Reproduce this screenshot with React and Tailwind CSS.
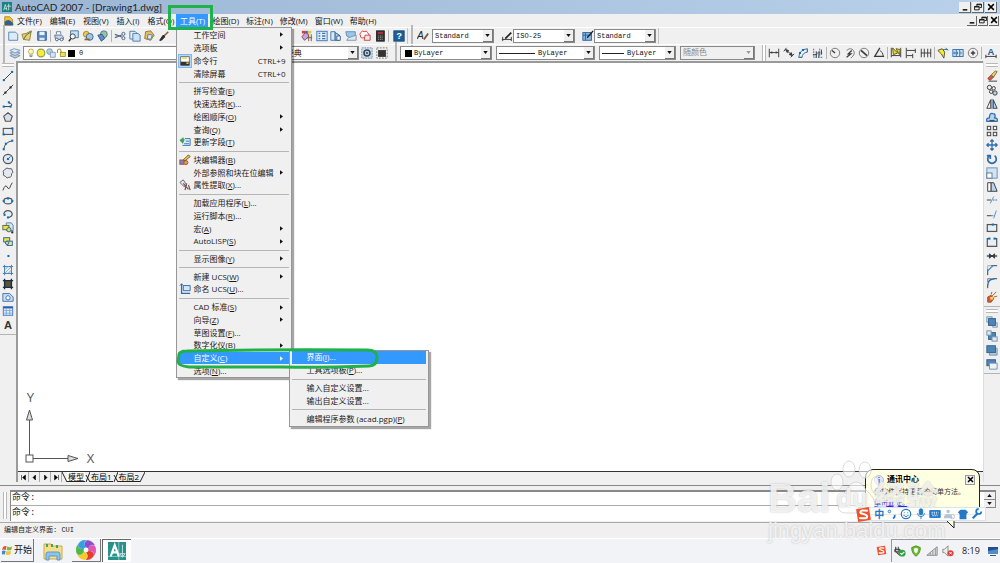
import React from "react";

const ui = "font-['Open_Sans','Noto_Sans_CJK_SC',sans-serif]";
const mono = "font-['Liberation_Mono','Noto_Sans_CJK_SC',monospace]";

const B = "#2f6cab";
const K = "#3c3c3c";
const L = "#b9d3ee";

function Svg({ children, className = "h-3 w-3" }) {
  return (
    <svg viewBox="0 0 14 14" fill="none" stroke={K} strokeWidth="1.1" className={"block shrink-0 " + className} aria-hidden="true">
      {children}
    </svg>
  );
}

const dot = (x, y, c = "#0a6fc2") => <rect x={x - 1.2} y={y - 1.2} width="2.4" height="2.4" fill={c} stroke="none" key={x + "-" + y} />;

const I = {
  new: <path d="M2 2.5h8l2.5 2.5v7H2z" fill="#dcebf8" stroke="#5b86b5" />,
  open: <><path d="M1 5l5-1 6-3-2 11-7-1z" fill="#e7d27b" stroke="#9a8133" /><path d="M3 11l3-5 6-4" stroke="#3f6b46" /></>,
  save: <><path d="M2 2h10v10H2z" fill="#5b8ac6" stroke="#2f5c95" /><path d="M4 2h6v4H4z" fill="#eaf3fc" stroke="none" /><path d="M4 9h6v3H4z" fill="#dfe7ef" stroke="none" /></>,
  print: <><path d="M4 5V2h5v3" fill="#fff" stroke="#6a7fa0" /><path d="M2 6h8l2 2v3H3z" fill="#cfd7e3" stroke="#5b6f92" /><circle cx="4.5" cy="11" r="1.6" fill="#fff" stroke="#46618c" /><circle cx="10" cy="11" r="1.6" fill="#fff" stroke="#46618c" /></>,
  preview: <><path d="M3 1h9v8H3z" fill="#cfe2f5" stroke="#4775aa" /><circle cx="5.5" cy="7.5" r="3" fill="#eef6fd" /><path d="M3.5 10L1 13" strokeWidth="1.8" /></>,
  publish: <><circle cx="5" cy="5" r="3.4" fill="#f2c94a" stroke="#a8822a" /><circle cx="9" cy="8" r="4" fill="#9fc6e6" stroke="#376a9b" /><path d="M3 11h6" stroke="#876421" strokeWidth="2" /></>,
  dwf: <><circle cx="8" cy="5" r="4" fill="#9fc0a0" stroke="#4f7d93" /><path d="M1 6l5-1 3 5-4 3z" fill="#5e8cc4" stroke="#345d90" /></>,
  cut: <><path d="M1 5l8 3M1 9l8-3" stroke="#5d6b80" strokeWidth="1.5" /><circle cx="11" cy="9.5" r="1.8" stroke="#46618c" /><circle cx="11" cy="4.500" r="1.8" stroke="#46618c" /></>,
  copy: <><path d="M1 1.5h6l2 2v7H1z" fill="#e6f0fa" stroke="#4d7cad" /><path d="M4.500 4h6l2.500 2v7h-8.500z" fill="#cfe2f5" stroke="#4d7cad" /></>,
  paste: <><path d="M3 2l6-1 4 5-4 6-7-2z" fill="#e3bf5d" stroke="#9a7829" /><path d="M6 5l5 1-2 5-4-1z" fill="#dbe9f7" stroke="#5780aa" /></>,
  brush: <><path d="M12 2L7 7" stroke="#8a5a34" strokeWidth="1.8" /><path d="M6 6l2 2-4 4-2 0z" fill="#2c2c2c" stroke="#222" /></>,
  props: <><path d="M1 8l4-5 3 1 1 4-5 4z" fill="#c6a5d8" stroke="#7a4d7f" /><rect x="1" y="1" width="4" height="3" fill="#e33" stroke="none" /><rect x="5" y="1" width="3" height="3" fill="#36c" stroke="none" /><rect x="8" y="1" width="4" height="3" fill="#dc3" stroke="none" /><path d="M9 5v8M12 5v8M7 9l6 0" stroke="#7b5a39" /></>,
  center: <><rect x="1" y="1.500" width="12" height="11" fill="#e4effa" stroke="#3c78b4" /><path d="M3 4h2M3 7h2M3 10h2M7 4h4M7 7h4M7 10h4" stroke="#3c78b4" strokeWidth="1.6" /></>,
  palette: <><path d="M1 2h5v10H1z" fill="#dcebf8" stroke="#3c78b4" /><path d="M6 3l5 3v6H6z" fill="#b9d3ee" stroke="#355f8c" /><path d="M8 7h4v5H8z" fill="#fff" stroke="#355f8c" /></>,
  sheet: <><path d="M1 2h11v6l-6 1-4-2z" fill="#9cc4e6" stroke="#5f92bd" /><path d="M4 9l9-3v6H2z" fill="#dfe6ec" stroke="#7a97b0" /></>,
  markup: <><path d="M2 3q2-3 4-1 3-2 4 1 3 2 0 4 0 3-4 2-5 1-4-2-2-2 0-4z" fill="#fff" stroke="#de3535" /><path d="M7 6h6v6H6z" fill="#f6e8ea" stroke="#c44" /></>,
  calc: <><rect x="3" y="1" width="9" height="12" fill="#333" stroke="#222" /><rect x="4.500" y="2.500" width="6" height="2" fill="#b33" stroke="none" /><path d="M5 7h6M5 9h6M5 11h6" stroke="#aaa" strokeDasharray="1 1" /></>,
  help: <><rect x="1" y="1" width="12" height="12" fill="#1f5f98" stroke="#174a78" /><text x="7" y="11" fontSize="11" fontWeight="bold" textAnchor="middle" fill="#fff" stroke="none" fontFamily="Liberation Sans">?</text></>,
  textStyle: <><text x="0" y="10" fontSize="12" fontStyle="italic" fill="#222" stroke="none" fontFamily="Liberation Sans">A</text><path d="M13 4L8 11" stroke="#75543a" strokeWidth="2" /></>,
  dimStyle: <><path d="M1 11h11M2 8v5M12 8v5" /><path d="M12 3L5 10" stroke="#222" strokeWidth="2" /></>,
  tabStyle: <><rect x="1" y="3" width="10" height="9" fill="#8db8e2" stroke="#2e639e" /><path d="M1 6h10M4 3v9" stroke="#2e639e" /><path d="M13 1L6 9" stroke="#222" strokeWidth="1.6" /></>,
  layers: <><path d="M1 10l5-2 7 2-6 3z" fill="#b8cbdc" stroke="#7c98b2" /><path d="M1 7l5-2 7 2-6 3z" fill="#c9dae9" stroke="#7c98b2" /><path d="M1 4l5-2 7 2-6 3z" fill="#dcebf8" stroke="#7c98b2" /></>,
  bulb: <><circle cx="7" cy="5" r="3.600" fill="#fdf6b0" stroke="#b5a544" /><path d="M5.500 9v3h3V9" fill="#ccc" stroke="#777" /></>,
  sun: <circle cx="7" cy="7" r="5.400" fill="#f3ec3b" stroke="#8e9d5c" strokeWidth="1.600" />,
  freeze: <><circle cx="5" cy="5" r="4" fill="#b8cfdf" stroke="#6b8ca5" /><path d="M6 6h7v7H6z" fill="#d8e4ee" stroke="#7393ac" /></>,
  lock: <><path d="M2 7V4a2.500 2.500 0 015 0v2" stroke="#a1922d" strokeWidth="1.500" /><rect x="6" y="6" width="7" height="6" fill="#ece54a" stroke="#8e8433" /></>,
  gear: <><rect x="1" y="1" width="12" height="12" fill="#cfe0ee" stroke="#688bab" strokeDasharray="2 1" /><circle cx="7" cy="7" r="3.500" stroke="#345" strokeWidth="1.800" /><circle cx="7" cy="7" r="1" /></>,
  gear2: <><rect x="1" y="1" width="12" height="12" stroke="#777" strokeDasharray="2 1.500" /><rect x="3" y="4" width="8" height="7" fill="#333" /></>,
  dLinear: <><path d="M1.500 2v10M12.500 2v10M2 6.500h10" /><path d="M2 6.500l3-1.500v3zM12 6.500l-3-1.500v3z" fill={K} stroke="none" /></>,
  dAligned: <><path d="M3 3l8 7M1 5l3-4M9 12l4-4" /><path d="M3 3l3.500 1-1.500 2.500zM11 10l-3.500-1 2-2.500z" fill={K} /></>,
  dArc: <><path d="M2 12Q3 3 12 2M6 12q0-5 6-6" stroke={B} /><path d="M2 12h4M12 2v4" />{dot(3.500, 7)}{dot(7, 3.500)}</>,
  dOrd: <><path d="M2 2v10h10M5 7h7M9 2v8" strokeDasharray="2 1" stroke={B} /><path d="M1 9h5M5 5v7M8 5v7M11 9V3" /></>,
  dRad: <><circle cx="7" cy="7" r="5.500" stroke="#777" /><path d="M7 7L3.500 4" strokeWidth="1.600" /></>,
  dJog: <><path d="M3 4q5-4 8 0t-3 9" stroke="#777" /><path d="M9 4L5 8h3l-5 4" strokeWidth="1.500" /></>,
  dDia: <><circle cx="7" cy="7" r="5.500" stroke="#777" /><path d="M3.500 4l7 6" strokeWidth="2" /></>,
  dAng: <><path d="M8 1L2 11h11" strokeWidth="1.500" /><path d="M8 4q4 2 4 7" /></>,
  dQuick: <><path d="M1.500 1v11M12.500 1v11M2 10h10" /><path d="M3 1l6 6-5 2zM7 2l5 1-1 6z" fill="#e6d92a" stroke="#66601f" /></>,
  dBase: <path d="M1.500 1v12M2 4h10M2 10h7M12 2v5M9 8v5" />,
  dCont: <path d="M1.500 2v10M5 2v10M9 2v10M12.500 2v10M1 7h12" />,
  dLead: <><path d="M1 4l5-2 3 4-1 7-3-5z" fill="#f5e93a" stroke="#565322" /><path d="M7 3h6M10 1l3 3" stroke={B} /></>,
  dTol: <><rect x="1" y="3" width="12" height="8" fill="#dbe9f7" stroke={B} /><path d="M5 3v8M9 3v8" stroke={B} /><circle cx="3" cy="7" r="1" stroke={B} /><path d="M6.500 5.500v3M10.500 5.500v3" stroke={B} /></>,
  dCen: <><circle cx="7" cy="7" r="5.500" stroke="#777" /><path d="M7 4.500v5M4.500 7h5" strokeWidth="1.600" /></>,
  dEdit: <><text x="7" y="9" fontSize="11" fontWeight="bold" textAnchor="middle" fill="#2b5f98" stroke="none" fontFamily="Liberation Sans">A</text><path d="M1 9v4M13 9v4M1 11h12" /></>,
  line: <><path d="M2 12L12 2" />{dot(2.2, 11.8)}{dot(11.8, 2.2)}</>,
  xline: <><path d="M1 13L13 1" />{dot(4, 10, "#222")}{dot(10, 4, "#222")}</>,
  pline: <><path d="M2 10h8q3-2 0-4H8" />{dot(2, 10)}{dot(10, 10)}{dot(8, 5)}</>,
  polygon: <path d="M7 2l5 4-2 6H4L2 6z" fill="#d5dfea" stroke="#555" strokeWidth="1.300" />,
  rect: <><rect x="1.500" y="4" width="11" height="7" fill="#e3ecf5" strokeWidth="1.300" stroke="#555" />{dot(2, 11)}{dot(12, 4)}</>,
  arc: <><path d="M2 12Q3 4 12 2" />{dot(2, 12)}{dot(4.500, 5.500)}{dot(12, 2)}</>,
  circle: <><circle cx="7" cy="7" r="5.500" fill="#dce9f6" stroke="#555" strokeWidth="1.400" />{dot(7, 7)}<path d="M7 7l3-3" stroke={B} /></>,
  cloud: <path d="M3 3q3-3 5-1 4-1 4 2 2 3-1 4 1 4-3 4-2 2-4-1-4-1-2-4-2-2 1-4z" fill="#e2e9f0" stroke="#555" />,
  spline: <path d="M1 11q3-8 5-4t3 1 3-6" />,
  ellipse: <><ellipse cx="7" cy="7" rx="5" ry="3.400" fill="#e6eef7" stroke="#555" strokeWidth="1.300" />{dot(2, 7)}{dot(12, 7)}{dot(7, 4)}</>,
  earc: <><path d="M2 7q1-4 5-4t5 4q0 3-4 4" fill="#e6eef7" stroke="#555" strokeWidth="1.300" />{dot(3, 8)}{dot(7, 11)}</>,
  insert: <><path d="M5 1h6l2 3v6H5z" fill="#d4e4f3" stroke="#5684b2" /><rect x="1" y="4" width="7" height="5" fill="#eee14b" stroke="#5a6e33" /><circle cx="8" cy="9" r="2.500" fill="#e8dc66" stroke="#2d6297" />{dot(12, 12, "#222")}</>,
  block: <><rect x="2" y="2" width="7" height="5" fill="#eee14b" stroke="#2d6297" /><rect x="6" y="6" width="6" height="5" fill="#f1e97c" stroke="#2d6297" /><circle cx="6" cy="8" r="2" fill="#b9d3ee" stroke="#2d6297" /></>,
  point: dot(7.500, 7),
  hatch: <><path d="M3 1v12M11 1v12M1 3h12M1 11h12" stroke="#3975af" /><path d="M3 7l4-4M3 11l8-8M7 11l4-4" stroke="#7faad4" /></>,
  grad: <><rect x="3" y="3" width="8" height="8" fill="#5c5733" /><path d="M3 1v12M11 1v12M1 3h12M1 11h12" stroke="#1d2c47" strokeWidth="1.600" /></>,
  region: <><path d="M1 3h8l4 4v5H1z" fill="#c9def2" stroke="#3f76ae" /><circle cx="7" cy="8" r="2.500" fill="#fff" stroke="#3f76ae" /></>,
  table: <><rect x="1.500" y="2" width="11" height="10" fill="#e6f0fb" stroke="#4277bd" /><path d="M1.500 3h11" stroke="#2c5cab" strokeWidth="2" /><path d="M5 4v8M9 4v8M2 6.500h10M2 9.500h10" stroke="#7fa8dc" /></>,
  text: <text x="7" y="12" fontSize="13" fontWeight="bold" textAnchor="middle" fill="#333" stroke="none" fontFamily="Liberation Sans">A</text>,
  erase: <><path d="M2 10l4-4 3 2-4 4z" fill="#d75644" stroke="#903a2e" /><path d="M6 6l5-5 2 1-4 6z" fill="#eed56b" stroke="#7b6a30" /><path d="M3 13h10" /></>,
  mcopy: <><circle cx="4" cy="4" r="2.500" /><circle cx="9" cy="5" r="2" /><circle cx="6" cy="9" r="2" /><circle cx="10.500" cy="10.500" r="2.500" fill={L} /></>,
  mirror: <><path d="M5.500 2v10H1z" fill="#fff" /><path d="M8.500 2v10H13z" fill={L} /><path d="M7 1v12" stroke={B} /></>,
  offset: <><path d="M1 12q-1-4 3-4 0-6 4-5 4 0 2 5 4 0 3 4z" fill={L} stroke={B} strokeWidth="1.500" /><path d="M4 11h6" /></>,
  array: <><rect x="1.500" y="1.500" width="4" height="4" /><rect x="8.500" y="1.500" width="4" height="4" /><rect x="1.500" y="8.500" width="4" height="4" /><rect x="8.500" y="8.500" width="4" height="4" /></>,
  move: <path d="M7 1v12M1 7h12M5 3l2-2 2 2M5 11l2 2 2-2M3 5L1 7l2 2M11 5l2 2-2 2" stroke={B} strokeWidth="1.500" />,
  rotate: <path d="M4 3a5 5 0 106 0M1 3h4v4" stroke={B} strokeWidth="2" />,
  scale: <><rect x="1" y="1" width="12" height="12" fill="#d3e3f2" stroke="#6c91b6" /><rect x="1" y="7" width="6" height="6" fill="#fff" stroke="#58799b" /></>,
  stretch: <><path d="M2 2h4v10H2z" fill="#fff" /><path d="M6 2l3 0 4 10H6z" fill={L} /></>,
  trim: <><path d="M1 7h5" /><path d="M8 7h5" strokeDasharray="2 1" stroke={B} /><path d="M5 11l4-8" stroke="#4b91d6" /></>,
  extend: <><path d="M1 9h5" /><path d="M6 9h4" strokeDasharray="2 1" stroke={B} /><path d="M9 12l3-9" stroke="#4b91d6" /></>,
  brk1: <><rect x="1.500" y="3" width="11" height="8" fill="#e6eef7" stroke="#555" strokeWidth="1.400" />{dot(8, 3)}</>,
  brk2: <><path d="M4 3H1.500v9h11V3H10" fill="#e6eef7" stroke="#555" strokeWidth="1.400" />{dot(4, 3)}{dot(10, 3)}</>,
  join: <><path d="M1 7h12" strokeWidth="1.600" /><path d="M4 4.500L7 7 4 9.500zM10 4.500L7 7l3 2.500z" fill="#26466c" /></>,
  chamfer: <><path d="M2 13V6M6 2h7" /><path d="M2 8l6-6" stroke="#3b8be0" strokeWidth="1.500" /><path d="M2 6V2h4" stroke="#aaa" /></>,
  fillet: <><path d="M2 13V9M9 2h4" /><path d="M2 10q0-8 8-8" stroke="#1f69b6" strokeWidth="1.600" /><path d="M2 6V2h4" stroke="#777" /></>,
  explode: <><path d="M2 7l4-2 3 4-3 4H2z" fill="#e2533b" stroke="#8e5928" /><path d="M7 6l5-5M9 7l4-1M6 4l1-3" stroke="#a05b2c" /><rect x="5" y="7" width="3" height="3" fill="#f1e263" stroke="none" /></>,
  front: <><rect x="1" y="1" width="6" height="6" fill="#dfe9f2" stroke="#7394b3" /><rect x="8" y="8" width="5" height="5" fill="#dfe9f2" stroke="#7394b3" /><rect x="3" y="3" width="8" height="8" fill="#4f84b6" stroke="#33648f" /></>,
  back: <><rect x="3" y="3" width="8" height="8" fill="#4f84b6" stroke="#33648f" /><rect x="1" y="1" width="5" height="5" fill="#dfe9f2" stroke="#7394b3" /><rect x="7" y="8" width="6" height="5" fill="#dfe9f2" stroke="#7394b3" /></>,
  above: <><path d="M4 5h9v8H4z" fill="#b9cede" stroke="#7394b3" /><rect x="1" y="2" width="10" height="8" fill="#4f84b6" stroke="#33648f" /></>,
  under: <><rect x="1" y="2" width="10" height="7" fill="#4f84b6" stroke="#33648f" /><path d="M4 6h9v7H4z" fill="#eef3f8" stroke="#7394b3" /></>,
  cmdline: <><rect x="1" y="1" width="12" height="12" fill="#fff" stroke="#555" /><rect x="1" y="8" width="12" height="5" fill="#333" stroke="none" /><path d="M3 3h7" stroke="#e5d43a" strokeWidth="2" /><path d="M9 10h3" stroke="#f2e24a" strokeWidth="2" /></>,
  field: <><path d="M1 5l4-3v2h3v3H5v2z" fill="#3aa655" stroke="#2c8040" strokeWidth=".6" /><path d="M7 3h6v8H4" fill="#dcebf8" stroke="#3c78b4" /><path d="M6 9h6M8 6h4" stroke="#3c78b4" /></>,
  bedit: <><rect x="1" y="7" width="5" height="5" fill="#5f8fc4" stroke="#c2452f" /><circle cx="8" cy="10" r="2.400" fill="#e8944f" stroke="#b05429" /><path d="M5 7l6-6 2 2-6 5z" fill="#eec94d" stroke="#6d5726" /></>,
  attext: <><path d="M1 4l4-3 4 6-3 2z" fill="#e2e6ee" stroke="#6f5f75" /><path d="M5 5l6 7M9 5l-2 8M11 7l2 6" stroke="#7b4d50" strokeWidth="1.400" /></>,
  ucs: <><path d="M3 1v11h10" stroke="#2f6cab" strokeWidth="1.500" /><path d="M5 3h8v6H5z" fill="#d5e6f6" stroke="#2f6cab" /><path d="M1 3l2-2 2 2" stroke="#2f6cab" /></>,
};

function Tool({ name, label, className = "" }) {
  return (
    <button type="button" aria-label={label || name} className={"flex min-h-0 flex-1 items-center justify-center " + className}>
      <Svg>{I[name]}</Svg>
    </button>
  );
}

function Tools({ names, className }) {
  return (
    <div className={"flex shrink-0 self-stretch " + className}>
      {names.map((n) => <Tool key={n} name={n} />)}
    </div>
  );
}

const Sep = () => <span className="mx-px h-3 w-px shrink-0 bg-[#b4b4b4]" />;
const Grip = () => <span className="mx-px h-4 w-1 shrink-0 border-x border-[#b8b8b8] bg-white" />;
const GripH = () => <span className="my-0.5 block h-1 w-3 shrink-0 border-y border-[#b8b8b8] bg-white" />;

function Down({ up, disabled }) {
  return (
    <svg viewBox="0 0 6 4" className="h-[3px] w-[5px]" aria-hidden="true">
      <path d={up ? "M0 4h6L3 0z" : "M0 0h6L3 4z"} fill={disabled ? "#999" : "#111"} />
    </svg>
  );
}

function Combo({ label, value, before, className, disabled }) {
  return (
    <div className={"relative flex h-3.5 shrink-0 items-center border border-[#8a8a8a] pl-0.5 text-[7px] " + (disabled ? "bg-[#f0f0f0] text-[#888] " : "bg-white text-[#111] ") + mono + " " + className}>
      {before}
      <select aria-label={label} disabled={disabled} defaultValue={value} className="h-3 min-w-0 flex-1 appearance-none bg-transparent leading-3 outline-none">
        <option>{value}</option>
      </select>
      <span className="pointer-events-none flex h-3 w-2.5 shrink-0 items-center justify-center border-b border-r border-[#777] bg-[#f0f0f0]">
        <Down disabled={disabled} />
      </span>
    </div>
  );
}

function Right({ white }) {
  return (
    <svg viewBox="0 0 4 6" className="mr-0.5 h-[5px] w-[3px]" aria-hidden="true">
      <path d="M0 0l4 3-4 3z" fill={white ? "#fff" : "#111"} />
    </svg>
  );
}

function Item({ children, icon, sub, keys, on, tall, boxed }) {
  return (
    <li className={"flex min-h-0 " + (tall ? "h-[13px]" : "flex-1")}>
      <button type="button" className={"flex w-full items-center pr-1 text-left " + (on ? "bg-[#3399ff] text-white" : "text-[#1a1a1a]")}>
        <span className={"flex h-3 w-3 shrink-0 items-center justify-center " + (boxed ? "bg-[#b5d8fa] ring-1 ring-[#7fb6ec]" : "")}>
          {icon && <Svg className={boxed ? "h-2.5 w-2.5" : "h-3 w-3"}>{I[icon]}</Svg>}
        </span>
        <span className="ml-0.5 flex-1 whitespace-nowrap">{children}</span>
        {keys && <span className="text-[8px]">{keys}</span>}
        {sub && <Right white={on} />}
      </button>
    </li>
  );
}

const Line = () => <li className="flex h-[5px] shrink-0 items-center" role="separator"><span className="h-px w-full bg-[#b5b5b5]" /></li>;

const popup = "absolute flex flex-col border border-[#979797] bg-[#f0f0f0] px-0.5 text-[8px] leading-3 shadow-[2px_2px_1px_rgba(0,0,0,0.35)]";

function ToolsMenu() {
  return (
    <ul className={popup + " left-0 top-[13px] z-20 h-[351px] w-[116px]"}>
      <Item tall sub>工作空间</Item>
      <Item tall sub>选项板</Item>
      <Item tall icon="cmdline" boxed keys="CTRL+9">命令行</Item>
      <Item tall keys="CTRL+0">清除屏幕</Item>
      <Line />
      <Item>拼写检查(<u>E</u>)</Item>
      <Item>快速选择(<u>K</u>)...</Item>
      <Item sub>绘图顺序(<u>O</u>)</Item>
      <Item sub>查询(<u>Q</u>)</Item>
      <Item icon="field">更新字段(<u>T</u>)</Item>
      <Line />
      <Item icon="bedit">块编辑器(<u>B</u>)</Item>
      <Item sub>外部参照和块在位编辑</Item>
      <Item icon="attext">属性提取(<u>X</u>)...</Item>
      <Line />
      <Item>加载应用程序(<u>L</u>)...</Item>
      <Item>运行脚本(<u>R</u>)...</Item>
      <Item sub>宏(<u>A</u>)</Item>
      <Item sub>AutoLISP(<u>S</u>)</Item>
      <Line />
      <Item sub>显示图像(<u>Y</u>)</Item>
      <Line />
      <Item sub>新建 UCS(<u>W</u>)</Item>
      <Item icon="ucs">命名 UCS(<u>U</u>)...</Item>
      <Line />
      <Item sub>CAD 标准(<u>S</u>)</Item>
      <Item sub>向导(<u>Z</u>)</Item>
      <Item>草图设置(<u>F</u>)...</Item>
      <Item sub>数字化仪(<u>B</u>)</Item>
      <Item sub on>自定义(<u>C</u>)</Item>
      <Item>选项(<u>N</u>)...</Item>
    </ul>
  );
}

function CustomMenu() {
  return (
    <ul className={popup + " left-[113px] top-[336px] z-30 h-[77px] w-[140px] pb-px"}>
      <Item on>界面(<u>I</u>)...</Item>
      <Item>工具选项板(<u>P</u>)...</Item>
      <Line />
      <Item>输入自定义设置...</Item>
      <Item>输出自定义设置...</Item>
      <Line />
      <Item>编辑程序参数 (acad.pgp)(<u>P</u>)</Item>
    </ul>
  );
}

function WinButtons({ small }) {
  const s = "flex items-center justify-center border-b border-r border-[#666] bg-[#f0f0f0] " + (small ? "h-2.5 w-2.5" : "h-[11px] w-3");
  return (
    <div className="flex gap-px">
      <button type="button" aria-label="最小化" className={s}><Svg className="h-2 w-2"><path d="M3 12h8" stroke="#000" strokeWidth="2.500" /></Svg></button>
      <button type="button" aria-label="还原" className={s}><Svg className="h-2 w-2"><path d="M5 5V2h8v6h-3M1 6h8v6H1zM1 7h8M5 3h8" stroke="#000" strokeWidth="1.500" /></Svg></button>
      <button type="button" aria-label="关闭" className={s}><Svg className="h-2 w-2"><path d="M2 2l10 10M12 2L2 12" stroke="#000" strokeWidth="2.600" /></Svg></button>
    </div>
  );
}

function MenuBar() {
  const b = "whitespace-nowrap leading-[13px]";
  return (
    <nav className="flex h-[13px] items-center pl-1 pr-px text-[8px] text-[#111]">
      <Svg className="h-2.5 w-2.5"><path d="M1 1h7l4 4v8H1z" fill="#f2c230" stroke="#a97f14" /><path d="M1 8q6-6 12 3v2H1z" fill="#2f5f9c" stroke="none" /></Svg>
      <div className="ml-[3px] flex flex-1 gap-2">
        {["文件(F)", "编辑(E)", "视图(V)", "插入(I)"].map((t) => <button type="button" key={t} className={b}>{t}</button>)}
        <button type="button" className={b + " w-[21px] text-left"}>格式(O)</button>
        <div className="relative">
          <button type="button" aria-expanded="true" className={b + " w-8 bg-[#3399ff] text-white"}>工具(T)</button>
          <ToolsMenu />
          <CustomMenu />
          <span className="pointer-events-none absolute -left-2 -top-[9px] z-40 h-[25px] w-[45px] border-[3px] border-[#1fb14a]" />
          <svg viewBox="0 0 206 24" fill="none" className="pointer-events-none absolute -left-px top-[333px] z-40 h-6 w-[206px]" aria-hidden="true">
            <path d="M4 8Q4 4 12 4 100 2 192 3q10 0 10 7 0 9-8 9-50 2-86 1H14Q4 19 3 15z" stroke="#1fb14a" strokeWidth="3" strokeLinejoin="round" />
          </svg>
        </div>
        <div className="-ml-1 flex gap-[7px]">
          {["绘图(D)", "标注(N)", "修改(M)", "窗口(W)", "帮助(H)"].map((t) => <button type="button" key={t} className={b}>{t}</button>)}
        </div>
      </div>
      <WinButtons small />
    </nav>
  );
}

function Bars() {
  return (
    <>
      <div className="flex h-[17px] items-center border-t border-white">
        <div className="flex h-full shrink-0 items-center border-r border-[#c4c4c4]">
          <span className="ml-0.5"><Grip /></span>
          <Tools names={["new", "open", "save"]} className="w-[43px]" />
          <Sep />
          <Tools names={["print", "preview", "publish", "dwf"]} className="w-[58px]" />
          <Sep />
          <Tools names={["cut", "copy", "paste", "brush"]} className="w-[58px]" />
          <span className="w-[129px]" />
          <Tools names={["props", "center", "palette", "sheet", "markup", "calc"]} className="w-[87px]" />
          <Sep />
          <Tools names={["help"]} className="w-[17px]" />
        </div>
        <div className="flex h-full shrink-0 items-center border-r border-[#c4c4c4] pr-0.5">
          <span className="ml-0.5"><Grip /></span>
          <Tools names={["textStyle"]} className="w-[18px]" />
          <Combo label="文字样式" value="Standard" className="w-[62px]" />
          <span className="ml-1"><Sep /></span>
          <Tools names={["dimStyle"]} className="w-[13px]" />
          <Combo label="标注样式" value="ISO-25" className="w-[62px]" />
          <span className="ml-1"><Sep /></span>
          <Tools names={["tabStyle"]} className="w-[13px]" />
          <Combo label="表格样式" value="Standard" className="w-[62px]" />
        </div>
      </div>
      <div className="flex h-[17px] items-center border-t border-white">
        <span className="ml-0.5"><Grip /></span>
        <Tools names={["layers"]} className="w-[17px]" />
        <Combo
          label="图层" value="0" className="w-[224px]"
          before={<span className="mr-1 flex items-center"><Svg className="h-2.5 w-2.5">{I.bulb}</Svg><Svg className="h-2.5 w-2.5">{I.sun}</Svg><Svg className="h-2.5 w-2.5">{I.freeze}</Svg><Svg className="h-2.5 w-2.5">{I.lock}</Svg><span className="ml-0.5 h-[7px] w-[7px] bg-black" /></span>}
        />
        <Combo label="工作空间" value="AutoCAD 经典" className="ml-px w-[111px] text-[8px] [&>select]:font-['Noto_Sans_CJK_SC']" />
        <Tools names={["gear", "gear2"]} className="w-[31px]" />
        <span className="ml-1"><Grip /></span>
        <Combo label="颜色" value="ByLayer" className="ml-0.5 w-[92px]" before={<span className="mx-0.5 h-[7px] w-[7px] bg-black" />} />
        <span className="mx-px"><Sep /></span>
        <Combo label="线型" value="ByLayer" className="w-[99px]" before={<span className="mr-[3px] h-px w-9 bg-[#222]" />} />
        <span className="mx-px"><Sep /></span>
        <Combo label="线宽" value="ByLayer" className="w-[77px]" before={<span className="mr-[3px] h-px w-[22px] bg-[#222]" />} />
        <span className="mx-px"><Sep /></span>
        <Combo label="打印样式" value="随颜色" disabled className="w-[75px] text-[8px]" />
        <span className="mx-0.5"><Sep /></span>
        <Grip />
        <Tools names={["dLinear", "dAligned", "dArc", "dOrd"]} className="w-[58px]" />
        <Sep />
        <Tools names={["dRad", "dJog", "dDia", "dAng"]} className="w-[58px]" />
        <Sep />
        <Tools names={["dQuick", "dBase", "dCont"]} className="w-[44px]" />
        <Sep />
        <Tools names={["dLead", "dTol", "dCen"]} className="w-[44px]" />
        <Sep />
        <Tools names={["dEdit"]} className="w-4" />
      </div>
    </>
  );
}

function Drawing() {
  return (
    <div className="flex min-w-0 flex-1 flex-col border-l-2 border-t-2 border-[#9a9a9a]">
      <div className="flex flex-1 items-end bg-white">
        <svg viewBox="0 0 80 76" fill="none" stroke="#555" className="mb-[5px] ml-[3px] h-[76px] w-20" aria-hidden="true">
          <rect x="5" y="65" width="7" height="7" />
          <path d="M8.500 65V30M12 68.500h35" />
          <path d="M8.500 20l-3 10h6zM57 68.500l-10-3v6z" fill="#ddd" />
          <text x="9.500" y="12" fontSize="13" textAnchor="middle" fill="#555" stroke="none" fontFamily="Open Sans">Y</text>
          <text x="69.500" y="73" fontSize="13" textAnchor="middle" fill="#555" stroke="none" fontFamily="Open Sans">X</text>
        </svg>
      </div>
      <div className="flex h-[11px] items-stretch border-t border-[#333] text-[8px] leading-[9px]">
        {["M3 2v10M11 2L5 7l6 5z", "M9 2L4 7l5 5z", "M5 2l5 5-5 5z", "M11 2v10M3 2l6 5-6 5z"].map((d, i) => (
          <button key={d} type="button" aria-label={["第一个", "上一个", "下一个", "最后一个"][i]} className="flex w-[11px] items-center justify-center border-r border-[#aaa]">
            <Svg className="h-[7px] w-[7px]"><path d={d} fill="#000" stroke="#000" /></Svg>
          </button>
        ))}
        {["模型", "布局1", "布局2"].map((t, i) => (
          <React.Fragment key={t}>
            <svg viewBox="0 0 5 10" className="h-2.5 w-[5px]" aria-hidden="true"><path d={i ? "M5 0L1 10M1 3l4 7" : "M0 0l5 10"} stroke="#222" fill="none" /></svg>
            <button type="button" className={"whitespace-nowrap border-b border-[#222] px-px " + (i === 0 ? "bg-white" : "")}>{t}</button>
          </React.Fragment>
        ))}
        <svg viewBox="0 0 5 10" className="h-2.5 w-[5px]" aria-hidden="true"><path d="M5 0L0 10" stroke="#222" /></svg>
      </div>
    </div>
  );
}

function Command() {
  return (
    <section className="mt-[3px] flex border-t border-[#888] pt-1">
      <span className="mx-[3px] my-0.5 w-1 border-x border-[#b8b8b8] bg-white" />
      <div className={"flex min-w-0 flex-1 flex-col border-l border-t-2 border-[#888] bg-white pr-1 text-[9px] text-[#222] " + mono}>
        <p className="h-[14px] border-b border-[#aaa] pl-px leading-[13px]">命令:</p>
        <label className="flex h-[15px] items-center pl-px leading-[15px]">命令:<input aria-label="命令" className="ml-1 min-w-0 flex-1 bg-transparent outline-none" /></label>
      </div>
      <div className="mr-1 flex w-3 flex-col border-t-2 border-[#888]">
        <button type="button" aria-label="向上" className="flex h-2 items-center justify-center border-b border-r border-[#888]"><Down up /></button>
        <button type="button" aria-label="向下" className="flex h-2 items-center justify-center border-b border-r border-[#888]"><Down /></button>
      </div>
    </section>
  );
}

function Sogou({ className }) {
  return (
    <svg viewBox="0 0 16 16" className={className} aria-hidden="true">
      <path d="M1 3l12-2 2 12-12 2z" fill="#f0502a" />
      <path d="M12 4.500q-7-1-7 1.300C5 8 11.500 7 11.500 10q0 2.300-7.500 1.300" fill="none" stroke="#fff" strokeWidth="1.900" />
    </svg>
  );
}

function Taskbar() {
  const colors = ["#8a4fc8", "#e255b5", "#e23c31", "#f6c92c", "#4fb848", "#35a0e0"];
  return (
    <footer className="flex h-[25px] items-stretch border-t border-white bg-[#f1f3f6] pb-px">
      <button type="button" className="ml-px flex w-[33px] items-center justify-center gap-px border-b border-r border-[#777] text-[9px] text-[#111]">
        <svg viewBox="0 0 12 12" className="h-3 w-[11px]" aria-hidden="true">
          <path d="M1 3q2-2 4-1L4 6Q2 5 0 6z" fill="#e5512b" /><path d="M6 2q2 2 5 0l-1 4q-3 1-5 0z" fill="#7ab83c" />
          <path d="M0 7q2-1 4 0l-1 4q-2-1-3 0z" fill="#3a8ad6" /><path d="M5 7q2 1 5 0l-1 4q-3 1-5 0z" fill="#f3c22d" />
        </svg>
        开始
      </button>
      <button type="button" aria-label="资源管理器" className="flex w-[38px] items-center justify-center">
        <svg viewBox="0 0 22 20" className="h-5 w-[22px]" aria-hidden="true">
          <path d="M2 3h7l1 2h10v13H2z" fill="#f5df8c" stroke="#c9ab4b" /><path d="M5 3v3M10 3v3M15 4v3" stroke="#4aa05a" strokeWidth="2" />
          <path d="M4 19v-6q0-2 2-2h10q2 0 2 2v6h-3v-4H7v4z" fill="#8cc4ee" stroke="#5b9ac9" />
        </svg>
      </button>
      <button type="button" aria-label="浏览器" className="flex w-[29px] items-center justify-center border-b border-r border-[#777]">
        <svg viewBox="-10 -10 20 20" className="h-5 w-5" aria-hidden="true">
          {colors.map((c, i) => <path key={c} d="M0-2.500Q-3-7 1-9.500 6-9.500 8.300-5 5-6 3.500-4 2.500-2 2.200-1.300z" fill={c} stroke={c} strokeWidth=".6" transform={`rotate(${i * 60})`} />)}
          <circle r="2.400" fill="#fff" />
        </svg>
      </button>
      <button type="button" aria-label="AutoCAD" className="ml-px flex w-[29px] items-center justify-center border-l border-t border-[#666] bg-white">
        <svg viewBox="0 0 20 20" className="h-[18px] w-5" aria-hidden="true">
          <rect width="20" height="20" fill="#27918a" /><path d="M12 0v20M0 16h20" stroke="#91cfc7" />
          <path d="M3 16L7.500 3.500 12 16M5 11.500h5" stroke="#fff" strokeWidth="2.400" fill="none" /><path d="M16 3v13M13 13l3 4 3-4z" stroke="#d6eeea" fill="none" />
        </svg>
      </button>
      <div className="flex-1" />
      <div className="flex items-center pr-1"><Sogou className="h-[11px] w-[11px]" /></div>
      <div className="flex w-[109px] shrink-0 items-center gap-1 border-l border-t border-[#999] pl-0.5 text-[9px] text-[#222]">
        <Svg className="h-3 w-3"><path d="M2 2v5q2 4 5 5M5 2v4M1 5h6v3H1z" fill="#888" /><circle cx="9.500" cy="9.500" r="4" fill="#2ba33a" stroke="none" /><path d="M7.500 9.500l1.500 1.500 3-3" stroke="#fff" strokeWidth="1.500" /></Svg>
        <Svg className="h-3 w-3"><path d="M7 1l5 2q0 7-5 10-5-3-5-10z" fill="#6cc12d" stroke="#4a8e1c" /><path d="M7 3.500l2.500 1q0 4-2.500 5.500-2.500-1.500-2.500-5.500z" fill="#fff" stroke="none" /></Svg>
        <Svg className="h-3 w-3"><path d="M1 12h12V2z" fill="#ddd" stroke="#888" /><path d="M5 9v3M8 7v5M11 4v8" stroke="#999" /></Svg>
        <Svg className="h-3 w-3"><path d="M1 5h2l4-4v12L3 9H1z" fill="#eee" stroke="#888" /><circle cx="10" cy="9.500" r="3.500" fill="#dc3b32" stroke="none" /><path d="M8.500 8l3 3M11.500 8l-3 3" stroke="#fff" /></Svg>
        <time className="ml-1 flex-1">8:19</time>
        <svg viewBox="0 0 10 9" className="mr-0.5 h-[9px] w-2.5" aria-hidden="true"><rect width="10" height="7" fill="#254e8f" /><path d="M0 4l10-2v5H0z" fill="#4a8ed0" /><path d="M2 8.500h6" stroke="#555" /></svg>
      </div>
    </footer>
  );
}

function Balloon() {
  return (
    <aside className="absolute bottom-[43px] right-5 z-40 h-[51px] w-[115px]">
      <div className={"h-[46px] rounded-lg border border-[#222] bg-[#ffffe1] px-2 pt-[3px] text-[7px] leading-[13px] text-[#333] " + mono}>
        <div className="flex items-center">
          <svg viewBox="0 0 10 10" className="h-2.5 w-2.5" aria-hidden="true"><circle cx="5" cy="5" r="4.500" fill="#dfe3fb" stroke="#b3b9e2" /><path d="M5 4v4M5 2v1" stroke="#4a5bd4" strokeWidth="1.300" /></svg>
          <h2 className="ml-[3px] flex-1 text-[8px] font-bold text-black">通讯中心</h2>
          <button type="button" aria-label="关闭" className="-mr-1 flex h-2.5 w-2.5 items-center justify-center border border-[#999] bg-[#f0f0f0]"><Svg className="h-[7px] w-[7px]"><path d="M2 2l10 10M12 2L2 12" stroke="#000" strokeWidth="3" /></Svg></button>
        </div>
        <p className="whitespace-nowrap">使软件保持更新的简单方法。</p>
        <a href="#update" className="block leading-[9px] text-[#2222ee] underline">单击此处。</a>
      </div>
    </aside>
  );
}

function ImeBar() {
  const c = "#2478c8";
  return (
    <div className="absolute bottom-[42px] right-3.5 z-[60] flex h-[14px] w-[128px] items-center justify-between border border-[#d8e4ee] bg-white/90 pr-0.5 text-[10px] leading-3 text-[#2478c8]">
      <Sogou className="-my-1 -ml-1 h-[17px] w-[17px]" />
      <span className="font-bold">中</span>
      <Svg><circle cx="4" cy="4" r="1.500" stroke={c} /><path d="M10 8q1 3-2 4" stroke={c} strokeWidth="2" /></Svg>
      <Svg><circle cx="7" cy="7" r="5.500" stroke={c} strokeWidth="1.400" /><path d="M4 8q3 4 6 0M5 5v1M9 5v1" stroke={c} /></Svg>
      <Svg><rect x="5" y="1" width="4" height="7" rx="2" fill={c} stroke={c} /><path d="M3 6q0 4 4 4t4-4M7 10v3" stroke={c} /></Svg>
      <Svg><rect x="1" y="3" width="12" height="8" fill={c} stroke={c} /><path d="M3 5h8M3 7h8M4 9h6" stroke="#fff" strokeDasharray="1.500 1" /></Svg>
      <Svg><circle cx="6" cy="4" r="2" fill="#b5c3d2" stroke="none" /><path d="M1 12q0-5 5-5t5 5z" fill="#b5c3d2" stroke="none" /><circle cx="11" cy="10" r="2.500" stroke="#b5c3d2" /></Svg>
      <Svg><path d="M4 2h6l3 3-2 2v6H3V7L1 5z" fill={c} stroke="none" /></Svg>
      <Svg><path d="M2 12l6-6" stroke={c} strokeWidth="2.500" /><path d="M12 4a3 3 0 11-3-3" stroke={c} strokeWidth="2" /></Svg>
    </div>
  );
}

function Watermark() {
  const glow = "[text-shadow:0_0_2px_rgba(160,160,160,0.7)]";
  return (
    <div className="pointer-events-none absolute bottom-[20px] right-[50px] z-50 w-[182px] font-['Liberation_Sans','Noto_Sans_CJK_SC',sans-serif] text-white/75">
      <svg viewBox="0 0 50 56" fill="#fff" fillOpacity=".6" stroke="#ccc" strokeOpacity=".7" className="absolute -top-[9px] left-[62px] h-14 w-[50px]" aria-hidden="true">
        <ellipse cx="19" cy="9" rx="6" ry="8" /><ellipse cx="35" cy="10" rx="6" ry="8" /><ellipse cx="7" cy="22" rx="6" ry="8" /><ellipse cx="45" cy="25" rx="4" ry="8" />
        <path d="M26 22q6 0 10 8 9 8 9 15 0 8-9 8H16q-8 0-8-8 0-7 8-14 5-9 10-9z" />
      </svg>
      <div className={"relative flex items-center gap-1.5 pt-2 leading-[42px] " + glow}>
        <span className="text-[40px] font-bold">Bai</span>
        <span className="text-[26px] font-bold">du</span>
        <span className="text-[32px] font-bold">经验</span>
      </div>
      <p className={"text-[22px] leading-6 " + glow}>jingyan.baidu.com</p>
    </div>
  );
}

export default function App() {
  return (
    <div className={"relative flex min-h-screen flex-col overflow-hidden bg-[#f0f0f0] " + ui}>
      <header className="flex h-3.5 items-center bg-gradient-to-r from-[#9bb6d4] to-[#b9d1ea] pl-0.5 pr-[3px]">
        <svg viewBox="0 0 12 12" className="h-2.5 w-2.5" aria-hidden="true"><rect width="12" height="12" fill="#1e7f7b" /><path d="M2 10l2-7 2 7M3 8h3M8 2v8M6 5h5" stroke="#c9ece8" fill="none" /></svg>
        <h1 className="ml-[3px] flex-1 font-['Lato'] text-[10px] leading-[14px] text-[#222]">AutoCAD 2007 - [Drawing1.dwg]</h1>
        <WinButtons />
      </header>
      <MenuBar />
      <Bars />
      <main className="flex flex-1 items-stretch">
        <div className="flex w-4 shrink-0 flex-col items-center">
          <GripH />
          <div className="flex h-[263px] w-full flex-col">
            {["line", "xline", "pline", "polygon", "rect", "arc", "circle", "cloud", "spline", "ellipse", "earc", "insert", "block", "point", "hatch", "grad", "region", "table", "text"].map((n) => <Tool key={n} name={n} />)}
          </div>
          <span className="mt-0.5 h-px w-full bg-[#b4b4b4]" />
        </div>
        <Drawing />
        <div className="flex w-[17px] shrink-0 flex-col items-center border-l border-[#ddd]">
          <GripH />
          <div className="flex h-[235px] w-full flex-col">
            {["erase", "mcopy", "mirror", "offset", "array", "move", "rotate", "scale", "stretch", "trim", "extend", "brk1", "brk2", "join", "chamfer", "fillet", "explode"].map((n) => <Tool key={n} name={n} />)}
          </div>
          <span className="mt-0.5 h-px w-full bg-[#b4b4b4]" />
          <GripH />
          <div className="flex h-[56px] w-full flex-col">
            {["front", "back", "above", "under"].map((n) => <Tool key={n} name={n} />)}
          </div>
          <span className="mt-0.5 h-px w-full bg-[#b4b4b4]" />
        </div>
      </main>
      <Command />
      <div className={"mt-px flex h-4 items-center border-t border-[#aaa] pl-1 text-[7px] text-[#222] " + mono}>编辑自定义界面: CUI</div>
      <Taskbar />
      <Balloon />
      <Watermark />
      <ImeBar />
      <svg viewBox="0 0 10 9" className="absolute bottom-[34px] right-[45px] z-50 h-[9px] w-2.5" aria-hidden="true"><path d="M1 0l8 8V0" fill="#ffffe1" stroke="#222" /></svg>
    </div>
  );
}
